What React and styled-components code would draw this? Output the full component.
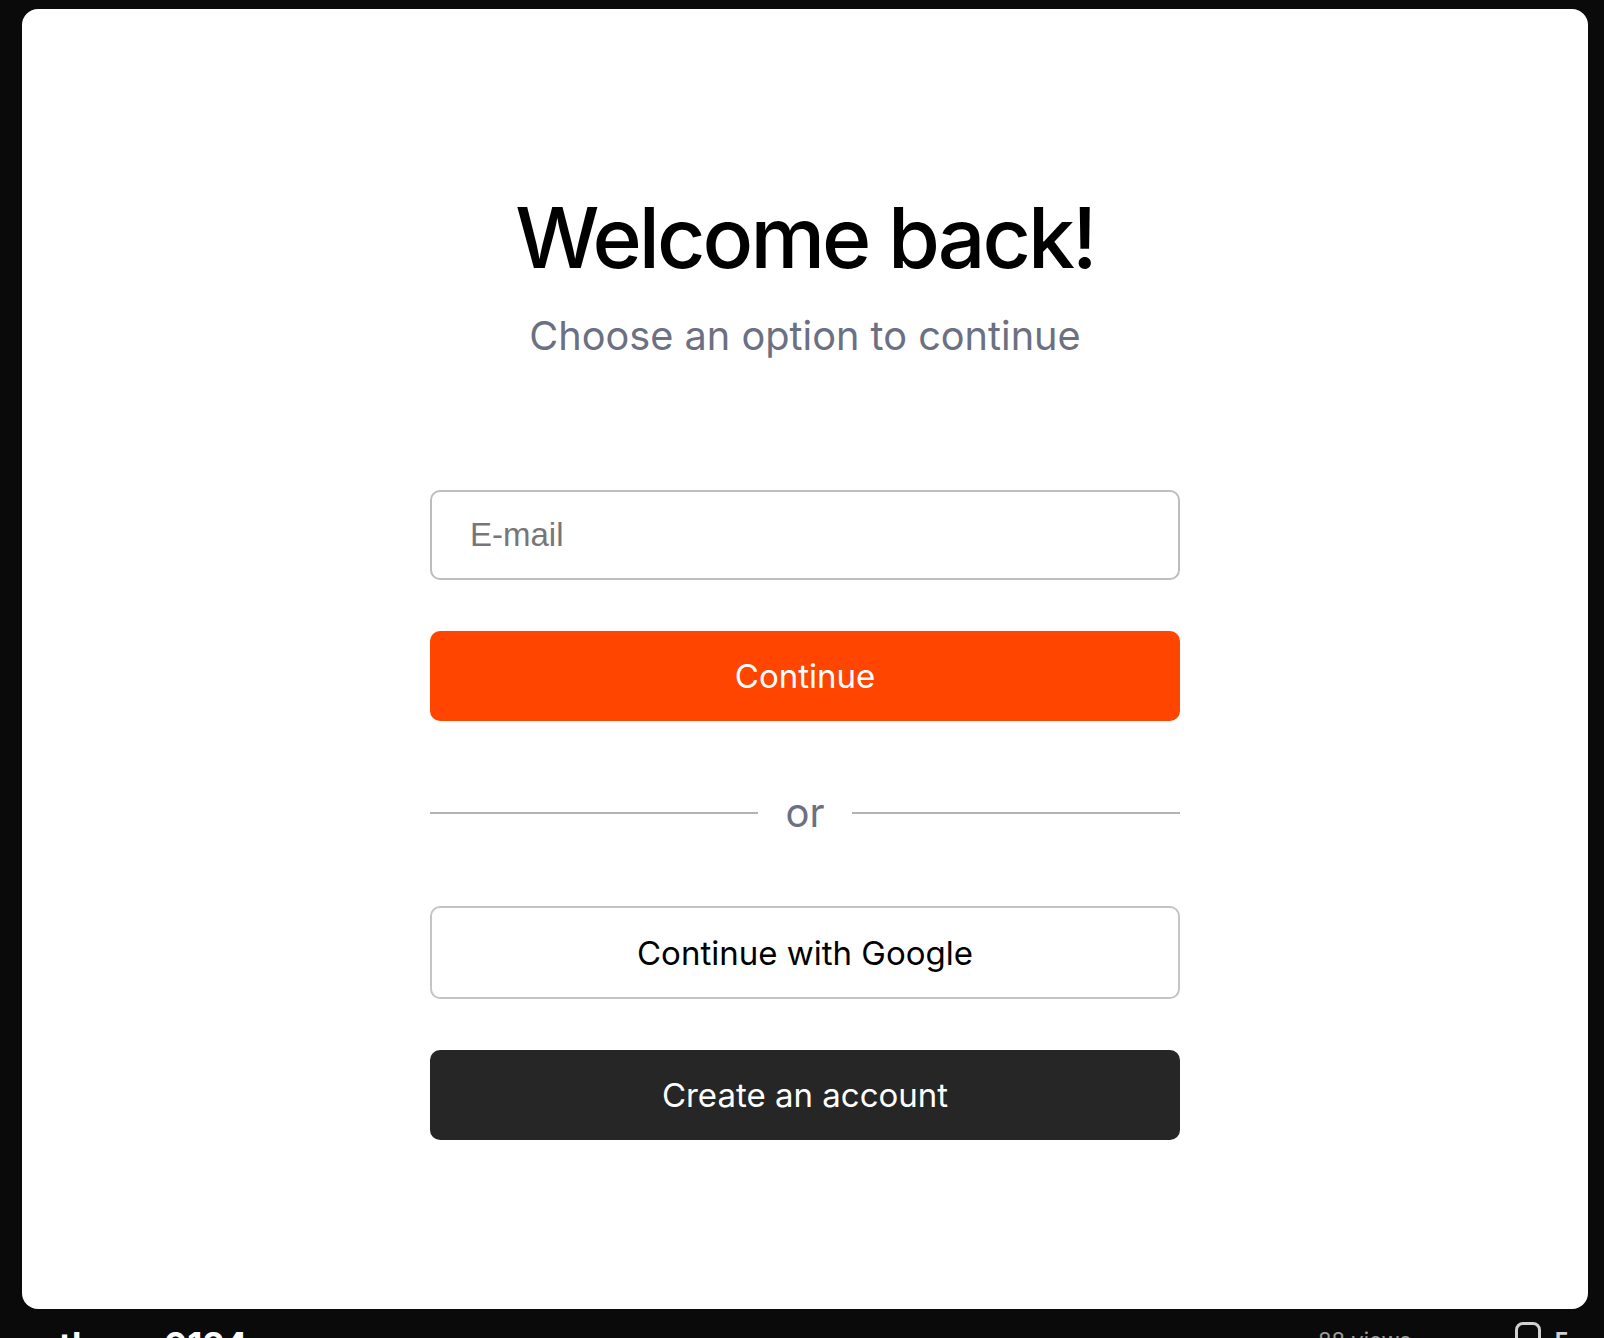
import React from "react";
import styled, { createGlobalStyle } from "styled-components";

const GlobalStyle = createGlobalStyle`
    html, body {
        margin: 0;
        padding: 0;
        background: #0a0a0a;
        height: 1338px;
        overflow: hidden;
    }
    * {
        box-sizing: border-box;
    }
`;

const Page = styled.div`
    padding: 9px 16px 0 22px;
    font-family: Inter, "Noto Sans", sans-serif;
`;

const Card = styled.main`
    height: 1300px;
    background: #ffffff;
    border-radius: 16px;
    display: flex;
    flex-direction: column;
    align-items: center;
    padding-top: 179px;
`;

const Title = styled.h1`
    margin: 0;
    font-size: 84px;
    font-weight: 500;
    line-height: 1.2;
    letter-spacing: -0.035em;
    color: #000000;
`;

const Subtitle = styled.p`
    margin: 24px 0 0;
    font-size: 39.7px;
    line-height: 1.2;
    color: #6b7082;
`;

const Form = styled.form`
    width: 750px;
    margin-top: 130px;
    display: flex;
    flex-direction: column;
`;

const EmailInput = styled.input`
    height: 90px;
    width: 100%;
    padding: 0 38px;
    border: 2px solid #bdbdbd;
    border-radius: 10px;
    font-family: "Liberation Sans", Arial, sans-serif;
    font-size: 33px;
    color: #222;
    outline: none;
    &::placeholder {
        color: #767676;
    }
`;

const Button = styled.button`
    height: ${(p) => (p.$outline ? "93px" : "90px")};
    width: 100%;
    margin-top: ${(p) => p.$gap || 0}px;
    border-radius: 10px;
    border: ${(p) => (p.$outline ? "2px solid #c4c4c4" : "none")};
    background: ${(p) => p.$bg || "#ffffff"};
    color: ${(p) => p.$color || "#000000"};
    font-family: Inter, "Noto Sans", sans-serif;
    font-size: 33px;
    font-weight: 400;
    cursor: pointer;
`;

const Divider = styled.div`
    display: flex;
    align-items: center;
    gap: 27px;
    margin: 68px 0 69px;
    span {
        font-size: 40px;
        color: #6b7082;
        line-height: 1.2;
    }
    &::before,
    &::after {
        content: "";
        flex: 1;
        height: 2px;
        background: #b3b3b3;
    }
`;

const Footer = styled.footer`
    display: flex;
    justify-content: space-between;
    align-items: flex-start;
    padding: 15px 20px 0 37px;
`;

const FooterBrand = styled.div`
    color: #ffffff;
    font-size: 35px;
    font-weight: 700;
    line-height: 1.2;
    display: flex;
    gap: 70px;
`;

const FooterMeta = styled.div`
    display: flex;
    align-items: flex-start;
    gap: 104px;
    color: #9a9a9a;
    font-size: 22px;
    line-height: 1.2;
    padding-top: 3px;
`;

const FooterActions = styled.div`
    display: flex;
    align-items: flex-start;
    gap: 14px;
    color: #d0d0d0;
    font-weight: 700;
`;

const SquareIcon = styled.span`
    width: 26px;
    height: 26px;
    border: 3px solid #d0d0d0;
    border-radius: 8px;
    margin-top: -5px;
`;

export default function App() {
    return (
        <>
            <GlobalStyle />
            <Page>
                <Card>
                    <Title>Welcome back!</Title>
                    <Subtitle>Choose an option to continue</Subtitle>
                    <Form onSubmit={(e) => e.preventDefault()}>
                        <EmailInput type="email" placeholder="E-mail" />
                        <Button type="submit" $gap={51} $bg="#ff4500" $color="#ffffff">
                            Continue
                        </Button>
                        <Divider>
                            <span>or</span>
                        </Divider>
                        <Button type="button" $outline>
                            Continue with Google
                        </Button>
                        <Button type="button" $gap={51} $bg="#262626" $color="#ffffff">
                            Create an account
                        </Button>
                    </Form>
                </Card>
                <Footer>
                    <FooterBrand>
                        <span>th</span>
                        <span>0124</span>
                    </FooterBrand>
                    <FooterMeta>
                        <span>88 views</span>
                        <FooterActions>
                            <SquareIcon />
                            <span>F</span>
                        </FooterActions>
                    </FooterMeta>
                </Footer>
            </Page>
        </>
    );
}
